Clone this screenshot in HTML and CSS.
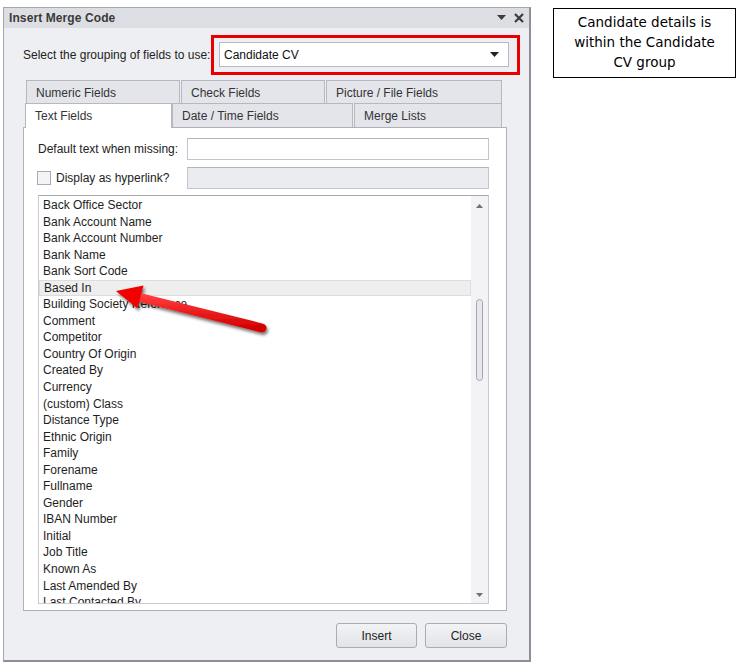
FILE: index.html
```html
<!DOCTYPE html>
<html>
<head>
<meta charset="utf-8">
<link rel="stylesheet" href="styles.css">
</head>
<body>
<div class="page">
  <div class="dialog">
    <div class="titlebar">
      <span class="title">Insert Merge Code</span>
      <span class="tb-icons">
        <svg width="9" height="6" viewBox="0 0 9 6"><path d="M0 0H9L4.5 5Z" fill="#3c3c3c"/></svg>
        <svg width="10" height="10" viewBox="0 0 10 10"><path d="M1 1L9 9M9 1L1 9" stroke="#3c3c3c" stroke-width="2.2"/></svg>
      </span>
    </div>
    <div class="body">
      <div class="group-row">
        <span class="group-label">Select the grouping of fields to use:</span>
        <div class="highlight">
          <div class="combo">
            <span>Candidate CV</span>
            <svg width="9" height="5" viewBox="0 0 9 5"><path d="M0 0H9L4.5 5Z" fill="#222"/></svg>
          </div>
        </div>
      </div>
      <div class="tabs">
        <div class="tab-row row1">
          <div class="tab w-num">Numeric Fields</div>
          <div class="tab w-check">Check Fields</div>
          <div class="tab w-pic">Picture / File Fields</div>
        </div>
        <div class="tab-row row2">
          <div class="tab active w-text">Text Fields</div>
          <div class="tab w-date">Date / Time Fields</div>
          <div class="tab w-merge">Merge Lists</div>
        </div>
        <div class="panel">
          <div class="form-row">
            <span class="form-label">Default text when missing:</span>
            <div class="input"></div>
          </div>
          <div class="form-row">
            <span class="form-label check-label"><span class="checkbox"></span>Display as hyperlink?</span>
            <div class="input disabled"></div>
          </div>
          <div class="list">
            <div class="items">
              <div class="item">Back Office Sector</div>
              <div class="item">Bank Account Name</div>
              <div class="item">Bank Account Number</div>
              <div class="item">Bank Name</div>
              <div class="item">Bank Sort Code</div>
              <div class="item selected">Based In</div>
              <div class="item">Building Society Reference</div>
              <div class="item">Comment</div>
              <div class="item">Competitor</div>
              <div class="item">Country Of Origin</div>
              <div class="item">Created By</div>
              <div class="item">Currency</div>
              <div class="item">(custom) Class</div>
              <div class="item">Distance Type</div>
              <div class="item">Ethnic Origin</div>
              <div class="item">Family</div>
              <div class="item">Forename</div>
              <div class="item">Fullname</div>
              <div class="item">Gender</div>
              <div class="item">IBAN Number</div>
              <div class="item">Initial</div>
              <div class="item">Job Title</div>
              <div class="item">Known As</div>
              <div class="item">Last Amended By</div>
              <div class="item">Last Contacted By</div>
            </div>
            <div class="scrollbar">
              <svg class="sb-arrow" width="7" height="4" viewBox="0 0 7 4"><path d="M0 4H7L3.5 0Z" fill="#6e7078"/></svg>
              <div class="sb-track"><div class="sb-thumb"></div></div>
              <svg class="sb-arrow" width="7" height="4" viewBox="0 0 7 4"><path d="M0 0H7L3.5 4Z" fill="#6e7078"/></svg>
            </div>
          </div>
        </div>
      </div>
      <div class="buttons">
        <button class="btn w-insert">Insert</button>
        <button class="btn w-close">Close</button>
      </div>
    </div>
  </div>
  <div class="note">Candidate details is within the Candidate CV group</div>
  <svg class="arrow" width="743" height="667" viewBox="0 0 743 667">
    <defs>
      <filter id="sh" x="-20%" y="-40%" width="140%" height="180%">
        <feDropShadow dx="1.5" dy="2.5" stdDeviation="1.6" flood-color="#000" flood-opacity="0.55"/>
      </filter>
      <linearGradient id="rg" x1="0" y1="0" x2="0" y2="1">
        <stop offset="0" stop-color="#ff3a3a"/>
        <stop offset="1" stop-color="#d40000"/>
      </linearGradient>
    </defs>
    <g filter="url(#sh)">
      <line x1="138" y1="297" x2="262" y2="328" stroke="url(#rg)" stroke-width="9" stroke-linecap="round"/>
      <path d="M116 291L143.5 285.5L137.5 308.5Z" fill="#f20000"/>
    </g>
  </svg>
</div>
</body>
</html>
```
FILE: styles.css
```css
* { box-sizing: border-box; }
body {
  margin: 0;
  background: #fff;
  font-family: "Liberation Sans", Arial, sans-serif;
  font-size: 12px;
  color: #1e1e1e;
}
.page {
  position: relative;
  width: 743px;
  height: 667px;
  display: flex;
  align-items: flex-start;
}
.dialog {
  margin: 7px 0 0 3px;
  width: 528px;
  height: 655px;
  flex-shrink: 0;
  background: #eeeff2;
  border: 1px solid #a5a7ac;
  border-right: 2px solid #8d9096;
  border-bottom: 2px solid #8d9096;
  display: flex;
  flex-direction: column;
}
.titlebar {
  height: 20px;
  background: #dcdee3;
  display: flex;
  align-items: center;
  justify-content: space-between;
  padding: 0 5px 0 5px;
}
.title {
  font-weight: bold;
  font-size: 12px;
  color: #3a3a3a;
  letter-spacing: 0.1px;
}
.tb-icons { display: flex; align-items: center; gap: 8px; }
.body {
  flex: 1;
  display: flex;
  flex-direction: column;
  padding: 7px 0 0 19px;
}
.group-row {
  display: flex;
  align-items: center;
  height: 40px;
}
.group-label { width: 188px; flex-shrink: 0; white-space: nowrap; color: #222; }
.highlight {
  flex-shrink: 0;
  border: 3px solid #ea0000;
  width: 309px;
  height: 40px;
  padding: 4px 8px 5px 5px;
}
.combo {
  height: 25px;
  background: #fff;
  border: 1px solid #b8bbc1;
  display: flex;
  align-items: center;
  justify-content: space-between;
  padding: 0 9px 0 4px;
  color: #111;
}
.tabs {
  margin-top: 5px;
  display: flex;
  flex-direction: column;
  width: 484px;
}
.tab-row { display: flex; height: 24px; }
.row1 { padding-left: 3px; }
.row2 { padding-left: 2px; margin-top: -1px; position: relative; z-index: 2; height: 24px; }
.tab {
  background: #e4e5ea;
  border: 1px solid #b6b8be;
  border-bottom: none;
  padding: 5px 0 0 9px;
  color: #333;
  white-space: nowrap;
  margin-right: 1px;
}
.tab.active {
  background: #fff;
  padding-top: 5px;
  height: 25px;
  margin-right: 0;
}
.w-num { width: 154px; }
.w-check { width: 144px; }
.w-pic { width: 176px; }
.w-text { width: 147px; }
.w-date { width: 181px; }
.w-merge { width: 148px; }
.panel {
  background: #fff;
  border: 1px solid #aeb1b7;
  height: 484px;
  padding: 10px 17px 6px 14px;
  display: flex;
  flex-direction: column;
}
.form-row {
  display: flex;
  align-items: center;
  justify-content: space-between;
  margin-bottom: 7px;
}
.form-label { color: #222; }
.check-label { display: flex; align-items: center; }
.checkbox {
  width: 14px;
  height: 14px;
  border: 1px solid #a9acb2;
  background: #f4f4f6;
  margin: 0 5px 0 -1px;
}
.input {
  width: 302px;
  height: 22px;
  background: #fff;
  border: 1px solid #c3c5ca;
  border-top-color: #b2b4ba;
}
.input.disabled { background: #ebecef; }
.list {
  flex: 1;
  display: flex;
  border: 1px solid #c9cbd0;
  border-top-color: #a7aaaf;
  overflow: hidden;
  margin-top: -1px;
}
.items {
  flex: 1;
  padding-top: 1px;
  overflow: hidden;
}
.item {
  height: 16.55px;
  line-height: 16px;
  padding-left: 4px;
  white-space: nowrap;
  color: #1e1e1e;
}
.item.selected {
  background: #eeeeef;
  border: 1px solid #dcdde0;
  line-height: 14px;
}
.scrollbar {
  width: 17px;
  background: #f3f3f6;
  display: flex;
  flex-direction: column;
  align-items: center;
  padding: 8px 0 6px;
}
.sb-track { flex: 1; width: 100%; display: flex; justify-content: center; padding-top: 91px; }
.sb-thumb {
  width: 7px;
  height: 82px;
  border: 1px solid #a4a7ae;
  border-radius: 4px;
  background: #e6e7eb;
}
.buttons {
  display: flex;
  justify-content: flex-end;
  gap: 8px;
  margin-top: 12px;
  width: 484px;
}
.btn {
  height: 25px;
  border: 1px solid #a9acb2;
  border-radius: 3px;
  background: linear-gradient(#f2f3f5, #e3e4e8);
  font-family: "Liberation Sans", Arial, sans-serif;
  font-size: 12px;
  color: #222;
}
.w-insert { width: 81px; }
.w-close { width: 82px; }
.note {
  margin: 8px 0 0 22px;
  width: 183px;
  height: 70px;
  border: 1px solid #000;
  text-align: center;
  font-family: "DejaVu Sans", sans-serif;
  font-size: 13.5px;
  line-height: 20px;
  padding: 3px 12px 0;
  color: #000;
}
.arrow {
  position: absolute;
  left: 0;
  top: 0;
  pointer-events: none;
}
```
